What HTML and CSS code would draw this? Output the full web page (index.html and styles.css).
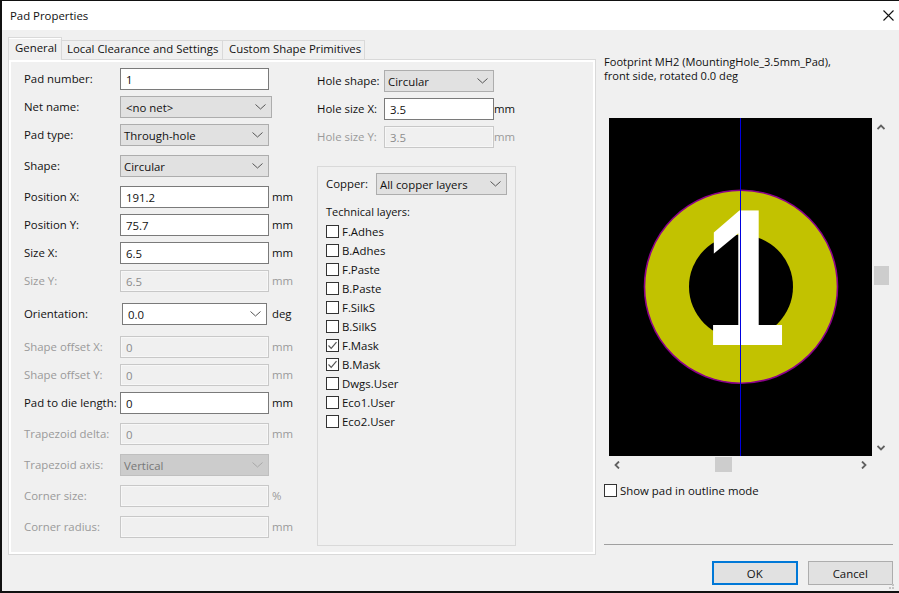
FILE: index.html
```html
<!DOCTYPE html>
<html lang="en">
<head>
    <meta charset="UTF-8">
    <meta name="viewport" content="width=device-width, initial-scale=1.0">
    <title>Pad Properties</title>
    <link rel="stylesheet" href="styles.css">
</head>
<body>
    <svg class="defs" width="0" height="0">
        <symbol id="chev" viewBox="0 0 11 6"><path d="M0.5 0.5 L5.5 5 L10.5 0.5" fill="none" stroke="currentColor" stroke-width="1"/></symbol>
        <symbol id="tick" viewBox="0 0 13 13"><path d="M2.5 6.5 L5.2 9.3 L10.5 3.2" fill="none" stroke="#555" stroke-width="1.2"/></symbol>
    </svg>
    <div class="dialog">
        <header class="titlebar">
            <span>Pad Properties</span>
            <svg class="close" width="11" height="11" viewBox="0 0 11 11"><path d="M0.5 0.5 L10.5 10.5 M10.5 0.5 L0.5 10.5" stroke="#111" stroke-width="1.1"/></svg>
        </header>
        <div class="content">
            <div class="left-side">
                <nav class="tabs">
                    <a class="tab active">General</a>
                    <a class="tab tab-clearance">Local Clearance and Settings</a>
                    <a class="tab tab-custom">Custom Shape Primitives</a>
                </nav>
                <section class="page">
                    <div class="col-fields">
                        <div class="row"><label>Pad number:</label><input class="field" value="1"></div>
                        <div class="row"><label>Net name:</label><div class="combo combo-net"><span>&lt;no net&gt;</span><svg class="chev"><use href="#chev"/></svg></div></div>
                        <div class="row"><label>Pad type:</label><div class="combo"><span>Through-hole</span><svg class="chev"><use href="#chev"/></svg></div></div>
                        <div class="row gap-31"><label>Shape:</label><div class="combo"><span>Circular</span><svg class="chev"><use href="#chev"/></svg></div></div>
                        <div class="row gap-31"><label>Position X:</label><input class="field" value="191.2"><span class="unit">mm</span></div>
                        <div class="row"><label>Position Y:</label><input class="field" value="75.7"><span class="unit">mm</span></div>
                        <div class="row"><label>Size X:</label><input class="field" value="6.5"><span class="unit">mm</span></div>
                        <div class="row off"><label>Size Y:</label><input class="field" value="6.5" disabled><span class="unit">mm</span></div>
                        <div class="row gap-33"><label>Orientation:</label><div class="combo combo-edit"><span>0.0</span><svg class="chev"><use href="#chev"/></svg></div><span class="unit">deg</span></div>
                        <div class="row gap-33 off"><label>Shape offset X:</label><input class="field" value="0" disabled><span class="unit">mm</span></div>
                        <div class="row off"><label>Shape offset Y:</label><input class="field" value="0" disabled><span class="unit">mm</span></div>
                        <div class="row"><label>Pad to die length:</label><input class="field" value="0"><span class="unit">mm</span></div>
                        <div class="row gap-31 off"><label>Trapezoid delta:</label><input class="field" value="0" disabled><span class="unit">mm</span></div>
                        <div class="row gap-31 off"><label>Trapezoid axis:</label><div class="combo combo-off"><span>Vertical</span><svg class="chev"><use href="#chev"/></svg></div></div>
                        <div class="row gap-31 off"><label>Corner size:</label><input class="field" disabled><span class="unit">%</span></div>
                        <div class="row gap-31 off"><label>Corner radius:</label><input class="field" disabled><span class="unit">mm</span></div>
                    </div>
                    <div class="col-hole">
                        <div class="row"><label>Hole shape:</label><div class="combo"><span>Circular</span><svg class="chev"><use href="#chev"/></svg></div></div>
                        <div class="row"><label>Hole size X:</label><input class="field" value="3.5"><span class="unit">mm</span></div>
                        <div class="row off"><label>Hole size Y:</label><input class="field" value="3.5" disabled><span class="unit">mm</span></div>
                        <div class="layers">
                            <div class="copper-row"><label>Copper:</label><div class="combo"><span>All copper layers</span><svg class="chev"><use href="#chev"/></svg></div></div>
                            <div class="layers-title">Technical layers:</div>
                            <div class="check"><span class="box"></span>F.Adhes</div>
                            <div class="check"><span class="box"></span>B.Adhes</div>
                            <div class="check"><span class="box"></span>F.Paste</div>
                            <div class="check"><span class="box"></span>B.Paste</div>
                            <div class="check"><span class="box"></span>F.SilkS</div>
                            <div class="check"><span class="box"></span>B.SilkS</div>
                            <div class="check"><span class="box"><svg width="13" height="13"><use href="#tick"/></svg></span>F.Mask</div>
                            <div class="check"><span class="box"><svg width="13" height="13"><use href="#tick"/></svg></span>B.Mask</div>
                            <div class="check"><span class="box"></span>Dwgs.User</div>
                            <div class="check"><span class="box"></span>Eco1.User</div>
                            <div class="check"><span class="box"></span>Eco2.User</div>
                        </div>
                    </div>
                </section>
            </div>
            <aside class="right-side">
                <p class="info">Footprint MH2 (MountingHole_3.5mm_Pad),<br>front side, rotated 0.0 deg</p>
                <div class="preview-wrap">
                    <svg class="preview" width="263" height="338" viewBox="0 0 263 338">
                        <rect width="263" height="338" fill="#000"/>
                        <circle cx="132" cy="168.7" r="96.5" fill="#c2c200" stroke="#8b008b" stroke-width="1.6"/>
                        <circle cx="132" cy="168.7" r="52" fill="#000"/>
                        <text class="pad-num" transform="translate(136 227) scale(0.76 1)" text-anchor="middle">1</text>
                        <line x1="131.5" y1="0" x2="131.5" y2="338" stroke="#0000e0" stroke-width="1"/>
                    </svg>
                    <div class="vscroll">
                        <svg class="arrow" width="8" height="6" viewBox="0 0 8 6"><path d="M0.5 5 L4 1.5 L7.5 5" fill="none" stroke="#606060" stroke-width="1.8"/></svg>
                        <div class="vthumb"></div>
                        <svg class="arrow" width="8" height="6" viewBox="0 0 8 6"><path d="M0.5 1 L4 4.5 L7.5 1" fill="none" stroke="#606060" stroke-width="1.8"/></svg>
                    </div>
                    <div class="hscroll">
                        <svg class="arrow" width="6" height="8" viewBox="0 0 6 8"><path d="M5 0.5 L1.5 4 L5 7.5" fill="none" stroke="#606060" stroke-width="1.8"/></svg>
                        <div class="hthumb"></div>
                        <svg class="arrow" width="6" height="8" viewBox="0 0 6 8"><path d="M1 0.5 L4.5 4 L1 7.5" fill="none" stroke="#606060" stroke-width="1.8"/></svg>
                    </div>
                </div>
                <div class="check outline-check"><span class="box"></span>Show pad in outline mode</div>
                <hr class="sep">
                <div class="buttons">
                    <button class="btn btn-ok">OK</button>
                    <button class="btn">Cancel</button>
                </div>
                <svg class="grip" width="8" height="8" viewBox="0 0 8 8"><path d="M5 1h2v2h-2z M2 4h2v2h-2z M5 4h2v2h-2z" fill="#c4c4c4"/></svg>
            </aside>
        </div>
    </div>
</body>
</html>
```

FILE: styles.css
```css
* {
    box-sizing: border-box;
}
html, body {
    margin: 0;
    padding: 0;
    height: 100%;
    overflow: hidden;
}
body {
    background-color: #111;
    font-family: "Open Sans", Arial, sans-serif;
    font-size: 11.4px;
    color: #111;
    padding: 1px 0 2px 2px;
}
.defs {
    position: absolute;
}
.dialog {
    background-color: #f0f0f0;
    height: 100%;
    display: flex;
    flex-direction: column;
}
.titlebar {
    background-color: #fff;
    height: 29px;
    flex: none;
    display: flex;
    align-items: center;
    justify-content: space-between;
    padding: 0 5px 0 8px;
}
.content {
    display: flex;
    flex: 1;
    padding-left: 6px;
}

/* tabs and page */
.left-side {
    width: 588px;
    flex: none;
}
.tabs {
    display: flex;
    align-items: flex-end;
    height: 29px;
    padding-top: 6px;
    position: relative;
    z-index: 1;
}
.tab {
    height: 19px;
    border: 1px solid #d9d9d9;
    border-bottom: none;
    border-left: none;
    padding: 0 6px;
    line-height: 16px;
    white-space: nowrap;
}
.tab.active {
    height: 23px;
    width: 54px;
    background: linear-gradient(#fff, #fff 1px, #f0f0f0 1px);
    border-left: 1px solid #d9d9d9;
    padding: 0 0 0 6px;
    line-height: 20px;
    margin-bottom: -1px;
}
.tab-clearance {
    width: 161px;
    padding-left: 5px;
}
.tab-custom {
    width: 142px;
}
.page {
    height: 496px;
    border: 1px solid #d9d9d9;
    box-shadow: inset 0 0 0 2px #fff;
    padding: 8px 0 0 15px;
    display: flex;
}
.col-fields {
    width: 293px;
    flex: none;
}
.col-hole {
    padding-top: 2px;
}

/* form rows */
.row {
    display: flex;
    align-items: center;
    height: 22px;
    margin-bottom: 6px;
}
.row label {
    width: 96px;
    flex: none;
    white-space: nowrap;
    padding-bottom: 2px;
}
.col-hole .row label {
    width: 67px;
}
.copper-row label {
    padding-bottom: 2px;
}
.gap-31 {
    margin-top: 9px;
}
.gap-33 {
    margin-top: 11px;
}
.field {
    width: 149px;
    height: 22px;
    border: 1px solid #7a7a7a;
    background: #fff;
    font: inherit;
    color: #111;
    padding: 0 5px;
    border-radius: 0;
    outline: none;
}
.col-hole .field {
    width: 110px;
}
.unit {
    margin-left: 3px;
    padding-bottom: 2px;
}
.col-hole .unit {
    margin-left: 0;
}
.off {
    color: #9a9a9a;
}
.off .field {
    border-color: #c8c8c8;
    background: #f0f0f0;
    box-shadow: inset 0 0 0 1px #f7f7f7;
    color: #8c8c8c;
}
.combo {
    width: 149px;
    height: 22px;
    border: 1px solid #adadad;
    background-color: #e1e1e1;
    color: #111;
    display: flex;
    align-items: center;
    justify-content: space-between;
    padding: 0 5px 0 3px;
}
.col-hole .combo {
    width: 110px;
}
.chev {
    width: 11px;
    height: 6px;
    color: #555;
}
.combo-net {
    width: 152px;
}
.combo-net span {
    padding-left: 2px;
}
.combo-edit {
    width: 145px;
    margin-left: 2px;
    background-color: #fff;
    border-color: #7a7a7a;
}
.combo-edit span {
    padding-left: 2px;
}
.combo-edit + .unit {
    margin-left: 5px;
}
.combo-off {
    background-color: #cccccc;
    border-color: #bfbfbf;
    color: #777;
}
.combo-off .chev {
    color: #a8a8a8;
}

/* technical layers box */
.layers {
    width: 199px;
    height: 380px;
    margin-top: 18px;
    border: 1px solid #d9d9d9;
    padding: 6px 8px;
}
.copper-row {
    display: flex;
    align-items: center;
    justify-content: space-between;
}
.layers .combo {
    width: 131px;
}
.layers-title {
    margin: 9px 0 2px;
    font-size: 11px;
    line-height: 16px;
}
.check {
    display: flex;
    align-items: center;
    height: 19px;
    white-space: nowrap;
}
.box {
    width: 13px;
    height: 13px;
    border: 1px solid #333;
    background: #fff;
    margin-right: 3px;
    flex: none;
    display: flex;
    align-items: center;
    justify-content: center;
}
.box svg {
    flex: none;
}

/* preview side */
.right-side {
    width: 297px;
    flex: none;
    padding: 0 0 0 8px;
    position: relative;
}
.info {
    margin: 25px 0 0;
    font-size: 11.1px;
    line-height: 14px;
}
.preview-wrap {
    position: relative;
    width: 290px;
    height: 364px;
    margin-top: 35px;
    margin-left: 5px;
}
.preview {
    display: block;
}
.pad-num {
    font-family: "Liberation Sans", Arial, sans-serif;
    font-weight: 700;
    font-size: 195px;
    fill: #fff;
}
.vscroll {
    position: absolute;
    left: 263px;
    top: 0;
    width: 18px;
    height: 338px;
    display: flex;
    flex-direction: column;
    align-items: center;
    justify-content: space-between;
    padding: 6px 0 5px;
}
.vthumb {
    width: 15px;
    height: 19px;
    background: #cdcdcd;
    margin-bottom: 24px;
}
.hscroll {
    position: absolute;
    left: 0;
    top: 339px;
    width: 263px;
    height: 15px;
    display: flex;
    align-items: center;
    justify-content: space-between;
    padding: 0 5px;
}
.hthumb {
    width: 17px;
    height: 15px;
    background: #cdcdcd;
    margin-right: 34px;
}
.outline-check {
    margin-top: -1px;
}
.sep {
    margin: 44px 0 0;
    width: 289px;
    border: none;
    border-top: 1px solid #a0a0a0;
}
.buttons {
    display: flex;
    gap: 10px;
    margin: 16px 0 0 108px;
}
.btn {
    width: 86px;
    height: 24px;
    font: inherit;
    color: #111;
    background-color: #e1e1e1;
    border: 1px solid #adadad;
    border-radius: 0;
    padding: 0;
}
.btn-ok {
    border: 2px solid #0078d7;
}
.grip {
    position: absolute;
    right: -2px;
    bottom: 0;
}
```
